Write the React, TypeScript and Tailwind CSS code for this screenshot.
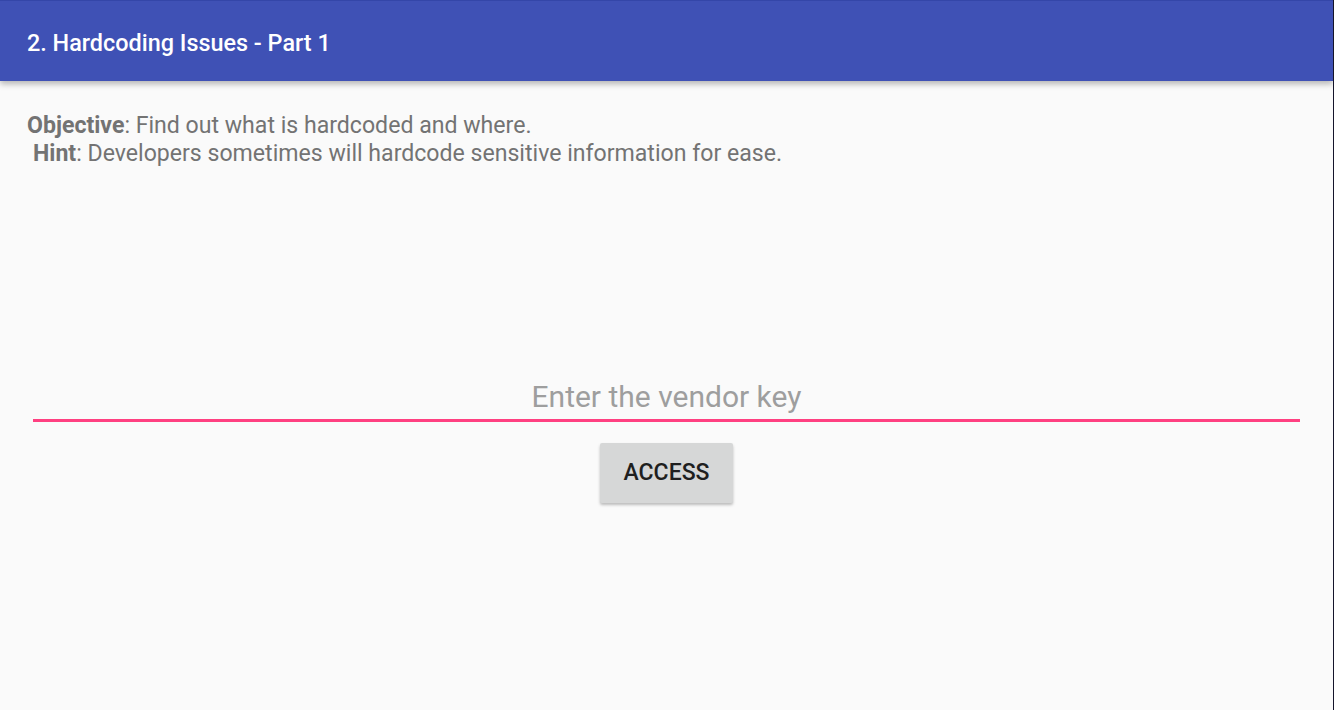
export default function App() {
  return (
    <div className="flex h-[710px] w-[1334px] flex-col overflow-hidden border-r border-[#14142a] bg-[#fafafa] font-['Roboto',sans-serif]">
      <header className="relative z-10 flex h-[81px] shrink-0 items-center border-t border-[#3446a8] bg-[#3f51b5] pl-[27px] pt-[6px] shadow-[0_3px_6px_rgba(0,0,0,0.28)]">
        <h1 className="text-[23.4px] font-medium text-white">2. Hardcoding Issues - Part 1</h1>
      </header>

      <div className="px-[27px] pt-[31px] text-[23.1px] leading-[28px] text-[#737373]">
        <p>
          <span className="font-bold">Objective</span>: Find out what is hardcoded and where.
        </p>
        <p>
          <span className="ml-[6px] font-bold">Hint</span>: Developers sometimes will hardcode sensitive information for ease.
        </p>
      </div>

      <div className="mt-[205px] flex flex-col items-center px-[33px]">
        <input
          className="h-[49px] w-full border-b-[3px] border-[#ff4081] bg-transparent pb-0 pt-[1px] text-center text-[30px] text-[#222] outline-none placeholder:text-[#9e9e9e]"
          placeholder="Enter the vendor key"
          aria-label="Vendor key"
        />
        <button
          type="button"
          className="mt-[21px] h-[60px] w-[133px] rounded-[2px] bg-[#d6d7d7] text-[23px] font-medium text-[#1f1f1f] shadow-[0_2px_3px_rgba(0,0,0,0.25)]"
        >
          ACCESS
        </button>
      </div>
    </div>
  );
}
